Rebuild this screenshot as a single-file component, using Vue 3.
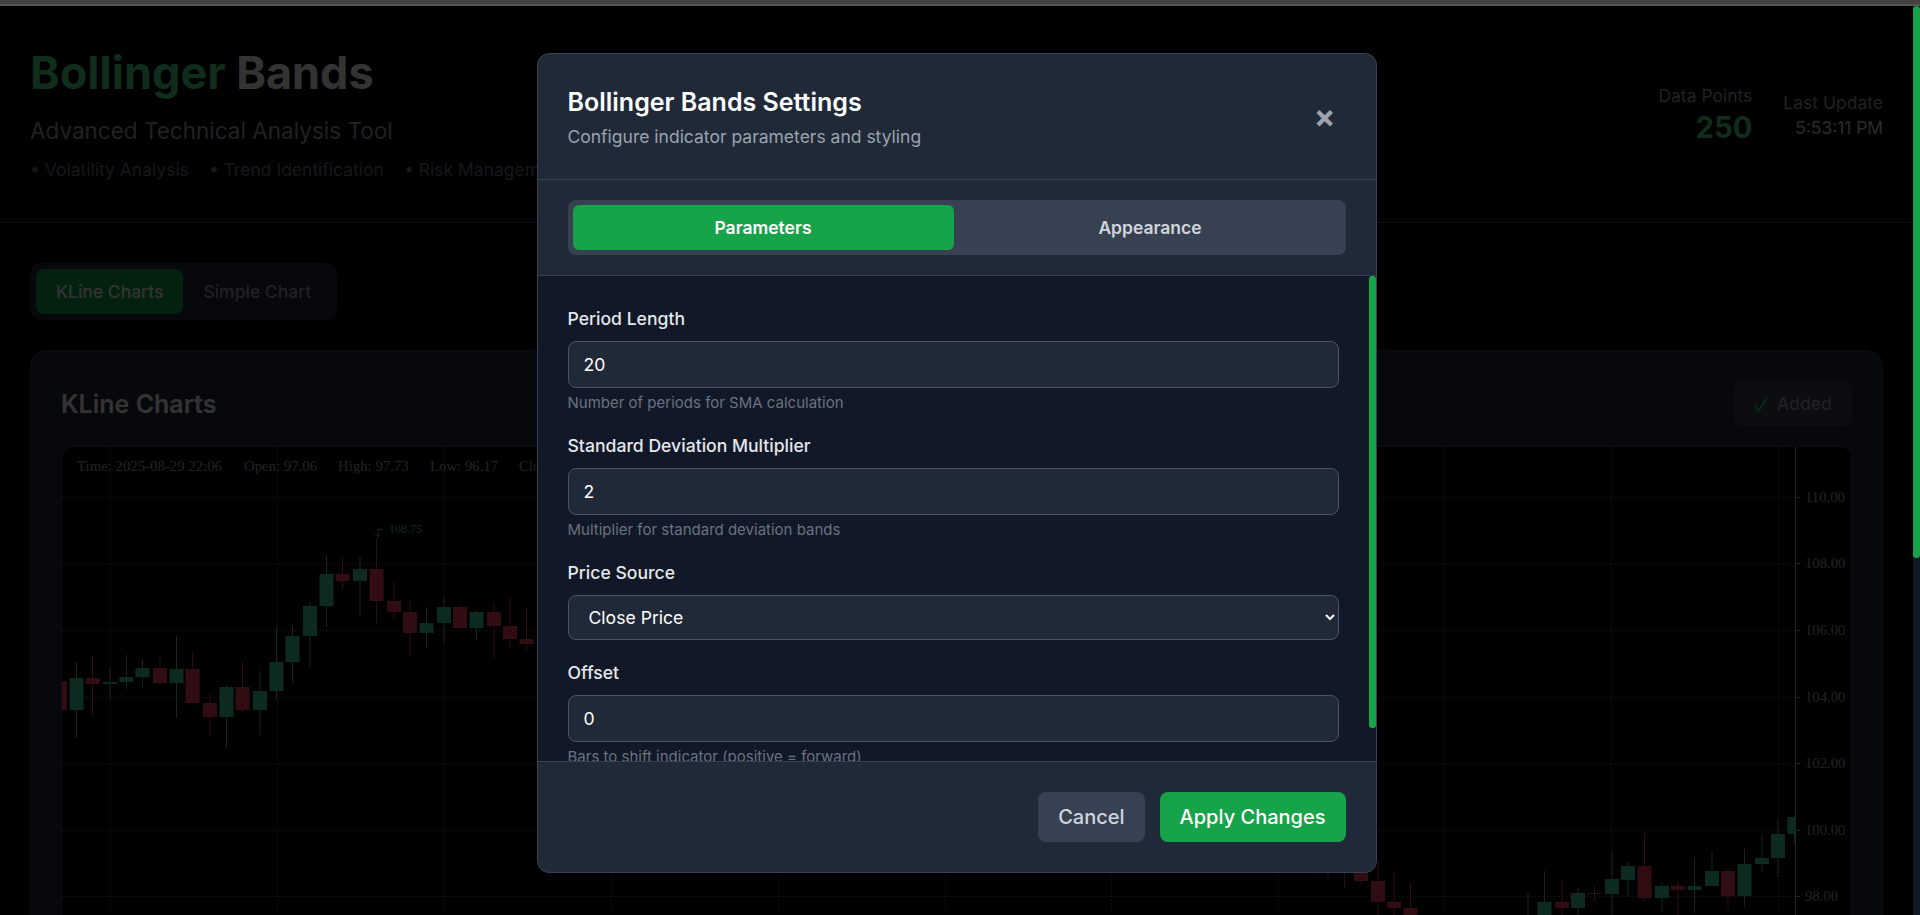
<template>
  <div class="app">
    <div class="window-edge"></div>
    <div class="viewport">
      <div class="page">
        <header class="page-header">
          <div>
            <h1 class="title"><span class="accent">Bollinger</span> Bands</h1>
            <p class="subtitle">Advanced Technical Analysis Tool</p>
            <ul class="features">
              <li v-for="item in features" :key="item">• {{ item }}</li>
            </ul>
          </div>
          <div class="stats">
            <div class="stat">
              <div class="stat-label">Data Points</div>
              <div class="stat-big">250</div>
            </div>
            <div class="stat">
              <div class="stat-label">Last Update</div>
              <div class="stat-time">5:53:11 PM</div>
            </div>
          </div>
        </header>

        <main class="content">
          <div class="chart-tabs">
            <button class="chart-tab active">KLine Charts</button>
            <button class="chart-tab">Simple Chart</button>
          </div>

          <section class="card">
            <div class="card-head">
              <h2>KLine Charts</h2>
              <button class="added">
                <svg class="check" width="14" height="16" viewBox="0 0 14 16">
                  <path d="M0.5 9L4.5 15L13.5 1" />
                </svg>
                Added
              </button>
            </div>
            <div class="chart">
              <svg class="chart-svg" viewBox="62 447 1789 1014" width="1789" height="1014">
                <g class="grid">
                  <line v-for="y in gridY" :key="'h' + y" x1="62" :x2="1795" :y1="y" :y2="y" />
                  <line v-for="x in gridX" :key="'v' + x" :x1="x" :x2="x" y1="447" y2="1461" />
                </g>
                <g v-for="(c, i) in candles" :key="i" :class="c[5] ? 'up' : 'down'">
                  <line class="wick" :x1="c[0]" :x2="c[0]" :y1="c[1]" :y2="c[2]" />
                  <rect :x="c[0] - 7" :y="c[3]" width="14" :height="c[4] - c[3]" />
                </g>
                <rect class="axis-mask" x="1796" y="447" width="55" height="1014" />
                <line class="axis" x1="1795.5" x2="1795.5" y1="447" y2="1461" />
                <g v-for="t in ticks" :key="t.label">
                  <line class="axis" x1="1795" x2="1800" :y1="t.y" :y2="t.y" />
                  <text class="axis-label" x="1805" :y="t.y + 4">{{ t.label }}</text>
                </g>
                <text class="legend" x="77" y="471">Time: 2025-08-29 22:06</text>
                <text class="legend" x="244" y="471">Open: 97.06</text>
                <text class="legend" x="338" y="471">High: 97.73</text>
                <text class="legend" x="430" y="471">Low: 96.17</text>
                <text class="legend" x="519" y="471">Close: 97.41</text>
                <path class="marker" d="M383 529.5H378V537M375 533.5L378 537L381 533.5" />
                <text class="marker-label" x="389" y="533">108.75</text>
              </svg>
            </div>
          </section>
        </main>
      </div>

      <div class="page-bar"><div class="page-thumb"></div></div>

      <div class="overlay">
        <div class="modal">
          <div class="modal-header">
            <div>
              <h3>Bollinger Bands Settings</h3>
              <p>Configure indicator parameters and styling</p>
            </div>
            <button class="close">×</button>
          </div>

          <div class="modal-tabs">
            <div class="tab-group">
              <button class="tab active">Parameters</button>
              <button class="tab">Appearance</button>
            </div>
          </div>

          <div class="modal-body">
            <div class="body-scroll">
              <div class="field">
                <label>Period Length</label>
                <input type="text" value="20" />
                <small>Number of periods for SMA calculation</small>
              </div>
              <div class="field">
                <label>Standard Deviation Multiplier</label>
                <input type="text" value="2" />
                <small>Multiplier for standard deviation bands</small>
              </div>
              <div class="field select-field">
                <label>Price Source</label>
                <select>
                  <option>Close Price</option>
                  <option>Open Price</option>
                  <option>High Price</option>
                  <option>Low Price</option>
                </select>
              </div>
              <div class="field">
                <label>Offset</label>
                <input type="text" value="0" />
                <small>Bars to shift indicator (positive = forward)</small>
              </div>
            </div>
            <div class="body-bar"><div class="body-thumb"></div></div>
          </div>

          <div class="modal-footer">
            <button class="btn cancel">Cancel</button>
            <button class="btn apply">Apply Changes</button>
          </div>
        </div>
      </div>
    </div>
  </div>
</template>

<script setup>
const features = ['Volatility Analysis', 'Trend Identification', 'Risk Management']

const gridY = [497.5, 563.5, 630.5, 697.5, 763.5, 830.5, 896.5]
const gridX = [110.5, 277.5, 444.5, 611.5, 778.5, 945.5, 1111.5, 1278.5, 1444.5, 1611.5, 1778.5]

const ticks = [
  { y: 497.5, label: '110.00' },
  { y: 563.5, label: '108.00' },
  { y: 630.5, label: '106.00' },
  { y: 697.5, label: '104.00' },
  { y: 763.5, label: '102.00' },
  { y: 830.5, label: '100.00' },
  { y: 896.5, label: '98.00' }
]

// x, wick top, wick bottom, body top, body bottom, rising
const candles = [
  [60, 660, 710, 681, 710, 0],
  [76.5, 662, 738, 678, 710, 1],
  [92.5, 656, 716, 678, 684, 0],
  [110, 667, 700, 682, 684, 1],
  [126.5, 655, 689, 677, 682, 1],
  [142.5, 660, 687, 668, 677, 1],
  [160, 654, 685, 668, 683, 0],
  [176.5, 636, 718, 669, 683, 1],
  [192.5, 652, 705, 669, 703, 0],
  [210, 694, 735, 703, 717, 0],
  [226.5, 685, 748, 687, 717, 1],
  [242.5, 662, 713, 687, 710, 0],
  [260, 671, 735, 691, 710, 1],
  [276.5, 627, 700, 662, 691, 1],
  [292.5, 626, 683, 636, 662, 1],
  [310, 602, 667, 606, 636, 1],
  [326.5, 556, 627, 574, 606, 1],
  [342.5, 558, 589, 574, 581, 0],
  [360, 557, 616, 569, 581, 1],
  [376.5, 538, 623, 569, 601, 0],
  [394, 582, 619, 601, 612, 0],
  [410, 600, 655, 612, 633, 0],
  [426.5, 607, 647, 623, 633, 1],
  [444, 598, 642, 607, 623, 1],
  [460, 605, 628, 607, 628, 0],
  [476.5, 610, 640, 612, 628, 1],
  [494, 603, 658, 612, 626, 0],
  [510, 598, 649, 626, 639, 0],
  [526.5, 608, 650, 639, 644, 0],
  [1344.5, 860, 888, 865, 870, 0],
  [1328, 860, 882, 865, 870, 0],
  [1361, 860, 885, 865, 881, 0],
  [1378, 862, 930, 881, 902, 0],
  [1394, 871, 930, 902, 908, 0],
  [1410.5, 883, 940, 908, 930, 0],
  [1528, 893, 930, 920, 930, 1],
  [1544.5, 871, 930, 902, 925, 1],
  [1562, 881, 930, 902, 908, 0],
  [1578, 888, 930, 893, 908, 1],
  [1594.5, 886, 901, 893, 894, 0],
  [1612, 852, 930, 879, 894, 1],
  [1628, 862, 897, 866, 880, 1],
  [1644.5, 833, 901, 866, 898, 0],
  [1662, 883, 911, 886, 898, 1],
  [1678, 881, 930, 886, 890, 0],
  [1694.5, 858, 913, 886, 890, 1],
  [1712, 851, 886, 871, 886, 1],
  [1728, 868, 910, 871, 896, 0],
  [1744.5, 849, 907, 864, 896, 1],
  [1762, 834, 871, 858, 864, 1],
  [1778, 821, 877, 834, 858, 1],
  [1794.5, 815, 843, 817, 834, 1]
]
</script>

<style scoped>
.app {
  height: 915px;
  overflow: hidden;
  font-family: Inter, "Noto Sans", sans-serif;
  color: #fff;
  background: #000;
}

.window-edge {
  height: 6px;
  box-sizing: border-box;
  background: #424242;
  border-bottom: 2px solid #555;
}

.viewport {
  position: relative;
  display: flex;
  height: 915px;
}

.page {
  flex: 1;
  min-width: 0;
  overflow: hidden;
  background: #000;
}

.page-bar {
  width: 7px;
  background: #111827;
}

.page-thumb {
  height: 552px;
  background: #16a34a;
  border-radius: 4px;
}

.page-header {
  display: flex;
  justify-content: space-between;
  align-items: center;
  padding: 31px 30px 39px;
  border-bottom: 1px solid #374151;
}

.title {
  margin: 0;
  font-size: 45px;
  line-height: 72px;
  font-weight: 700;
}

.accent {
  color: #4ade80;
}

.subtitle {
  margin: 5px 0 0;
  font-size: 22.5px;
  line-height: 33px;
  color: #9ca3af;
}

.features {
  display: flex;
  gap: 20px;
  margin: 10px 0 0;
  padding: 0;
  list-style: none;
  font-size: 17.5px;
  line-height: 26px;
  color: #6b7280;
}

.stats {
  display: flex;
  gap: 31px;
  align-items: center;
  margin-top: 7px;
  text-align: right;
}

.stat-label {
  font-size: 17.5px;
  line-height: 28px;
  color: #9ca3af;
}

.stat-big {
  font-size: 29.2px;
  line-height: 36px;
  font-weight: 700;
  color: #4ade80;
}

.stat-time {
  font-size: 17.4px;
  line-height: 22px;
  color: #d1d5db;
}

.content {
  padding: 40px 30px 30px;
}

.chart-tabs {
  display: flex;
  width: fit-content;
  padding: 6px;
  background: #1f2937;
  border-radius: 12px;
  margin-bottom: 30px;
}

.chart-tab {
  height: 45px;
  padding: 0 20px;
  border: 0;
  border-radius: 8px;
  background: transparent;
  font: 500 17.5px Inter, sans-serif;
  color: #9ca3af;
}

.chart-tab.active {
  background: #16a34a;
  color: #fff;
}

.card {
  padding: 30px;
  background: #1f2937;
  border: 1px solid #374151;
  border-radius: 16px;
}

.card-head {
  display: flex;
  justify-content: space-between;
  align-items: center;
  margin-bottom: 20px;
}

.card-head h2 {
  margin: 0;
  font-size: 25px;
  font-weight: 600;
}

.added {
  display: inline-flex;
  align-items: center;
  gap: 9px;
  height: 45px;
  padding: 0 20px;
  border: 0;
  border-radius: 8px;
  background: #374151;
  color: #9ca3af;
  font: 500 17.6px Inter, sans-serif;
}

.check {
  fill: none;
  stroke: #4ade80;
  stroke-width: 1.5;
}

.chart {
  height: 1014px;
  background: #000;
  border: 1px solid #374151;
  border-radius: 12px;
  overflow: hidden;
}

.chart-svg {
  display: block;
}

.grid line {
  stroke: #555;
  stroke-width: 1;
  stroke-dasharray: 2 2;
}

.wick {
  stroke-width: 1;
}

.up rect {
  fill: #3dd0a0;
}

.up .wick {
  stroke: #3dd0a0;
}

.down rect {
  fill: #f43f5e;
}

.down .wick {
  stroke: #f43f5e;
}

.axis-mask {
  fill: #000;
}

.axis {
  stroke: #aaa;
  stroke-width: 1;
}

.axis-label,
.legend,
.marker-label {
  font-family: "Liberation Serif", serif;
}

.axis-label {
  font-size: 14.7px;
  fill: #aaa;
}

.legend {
  font-size: 14.8px;
  fill: #aaa;
}

.marker {
  fill: none;
  stroke: #3dd0a0;
  stroke-width: 1;
}

.marker-label {
  font-size: 12px;
  fill: #3dd0a0;
}

.overlay {
  position: absolute;
  inset: 0 7px 0 0;
  display: flex;
  align-items: center;
  justify-content: center;
  padding-bottom: 1px;
  background: rgba(0, 0, 0, 0.8);
}

.modal {
  box-sizing: border-box;
  width: 840px;
  height: 820px;
  display: flex;
  flex-direction: column;
  overflow: hidden;
  background: #1f2937;
  border: 1px solid #374151;
  border-radius: 12px;
}

.modal-header {
  display: flex;
  justify-content: space-between;
  align-items: center;
  box-sizing: border-box;
  height: 126px;
  padding: 0 30px;
  border-bottom: 1px solid #374151;
}

.modal-header h3 {
  margin: 0;
  font-size: 25px;
  line-height: 38px;
  font-weight: 600;
}

.modal-header p {
  margin: 3px 0 0;
  font-size: 17.5px;
  line-height: 26px;
  color: #9ca3af;
}

.close {
  width: 42px;
  padding: 0;
  border: 0;
  background: transparent;
  color: #9ca3af;
  font: 700 32px/1 Inter, sans-serif;
}

.modal-tabs {
  box-sizing: border-box;
  height: 96px;
  padding: 20px 30px;
  border-bottom: 1px solid #374151;
}

.tab-group {
  display: flex;
  gap: 6px;
  padding: 5px;
  background: #374151;
  border-radius: 8px;
}

.tab {
  flex: 1;
  height: 45px;
  border: 0;
  border-radius: 6px;
  background: transparent;
  color: #d1d5db;
  font: 600 17.5px Inter, sans-serif;
}

.tab.active {
  background: #16a34a;
  color: #fff;
}

.modal-body {
  flex: 1;
  min-height: 0;
  display: flex;
  background: #111827;
}

.body-scroll {
  flex: 1;
  min-width: 0;
  padding: 30px;
  overflow: hidden;
}

.body-bar {
  width: 7px;
}

.body-thumb {
  height: 452px;
  background: #16a34a;
  border-radius: 3px;
}

.field {
  display: flex;
  flex-direction: column;
  margin-bottom: 19px;
}

.select-field {
  margin-bottom: 20px;
}

.field:last-child {
  margin-bottom: 0;
}

.field label {
  margin-bottom: 9px;
  font-size: 17.6px;
  line-height: 26px;
  font-weight: 500;
  color: #e5e7eb;
}

.field input,
.field select {
  box-sizing: border-box;
  height: 47px;
  padding: 0 15px;
  background: #1f2937;
  border: 1px solid #4b5563;
  border-radius: 8px;
  color: #fff;
  font: 400 17.6px Inter, sans-serif;
  outline: none;
}

.field select {
  height: 45px;
  padding: 0 16px;
}

.field small {
  margin-top: 3px;
  font-size: 15px;
  line-height: 23px;
  color: #6b7280;
}

.modal-footer {
  display: flex;
  justify-content: flex-end;
  gap: 15px;
  padding: 30px;
  border-top: 1px solid #374151;
}

.btn {
  height: 50px;
  padding: 0 20px;
  border: 0;
  border-radius: 8px;
  font: 500 20px Inter, sans-serif;
}

.cancel {
  background: #374151;
  color: #d1d5db;
}

.apply {
  background: #16a34a;
  color: #fff;
}
</style>

<style>
html,
body {
  margin: 0;
  overflow: hidden;
}
</style>
